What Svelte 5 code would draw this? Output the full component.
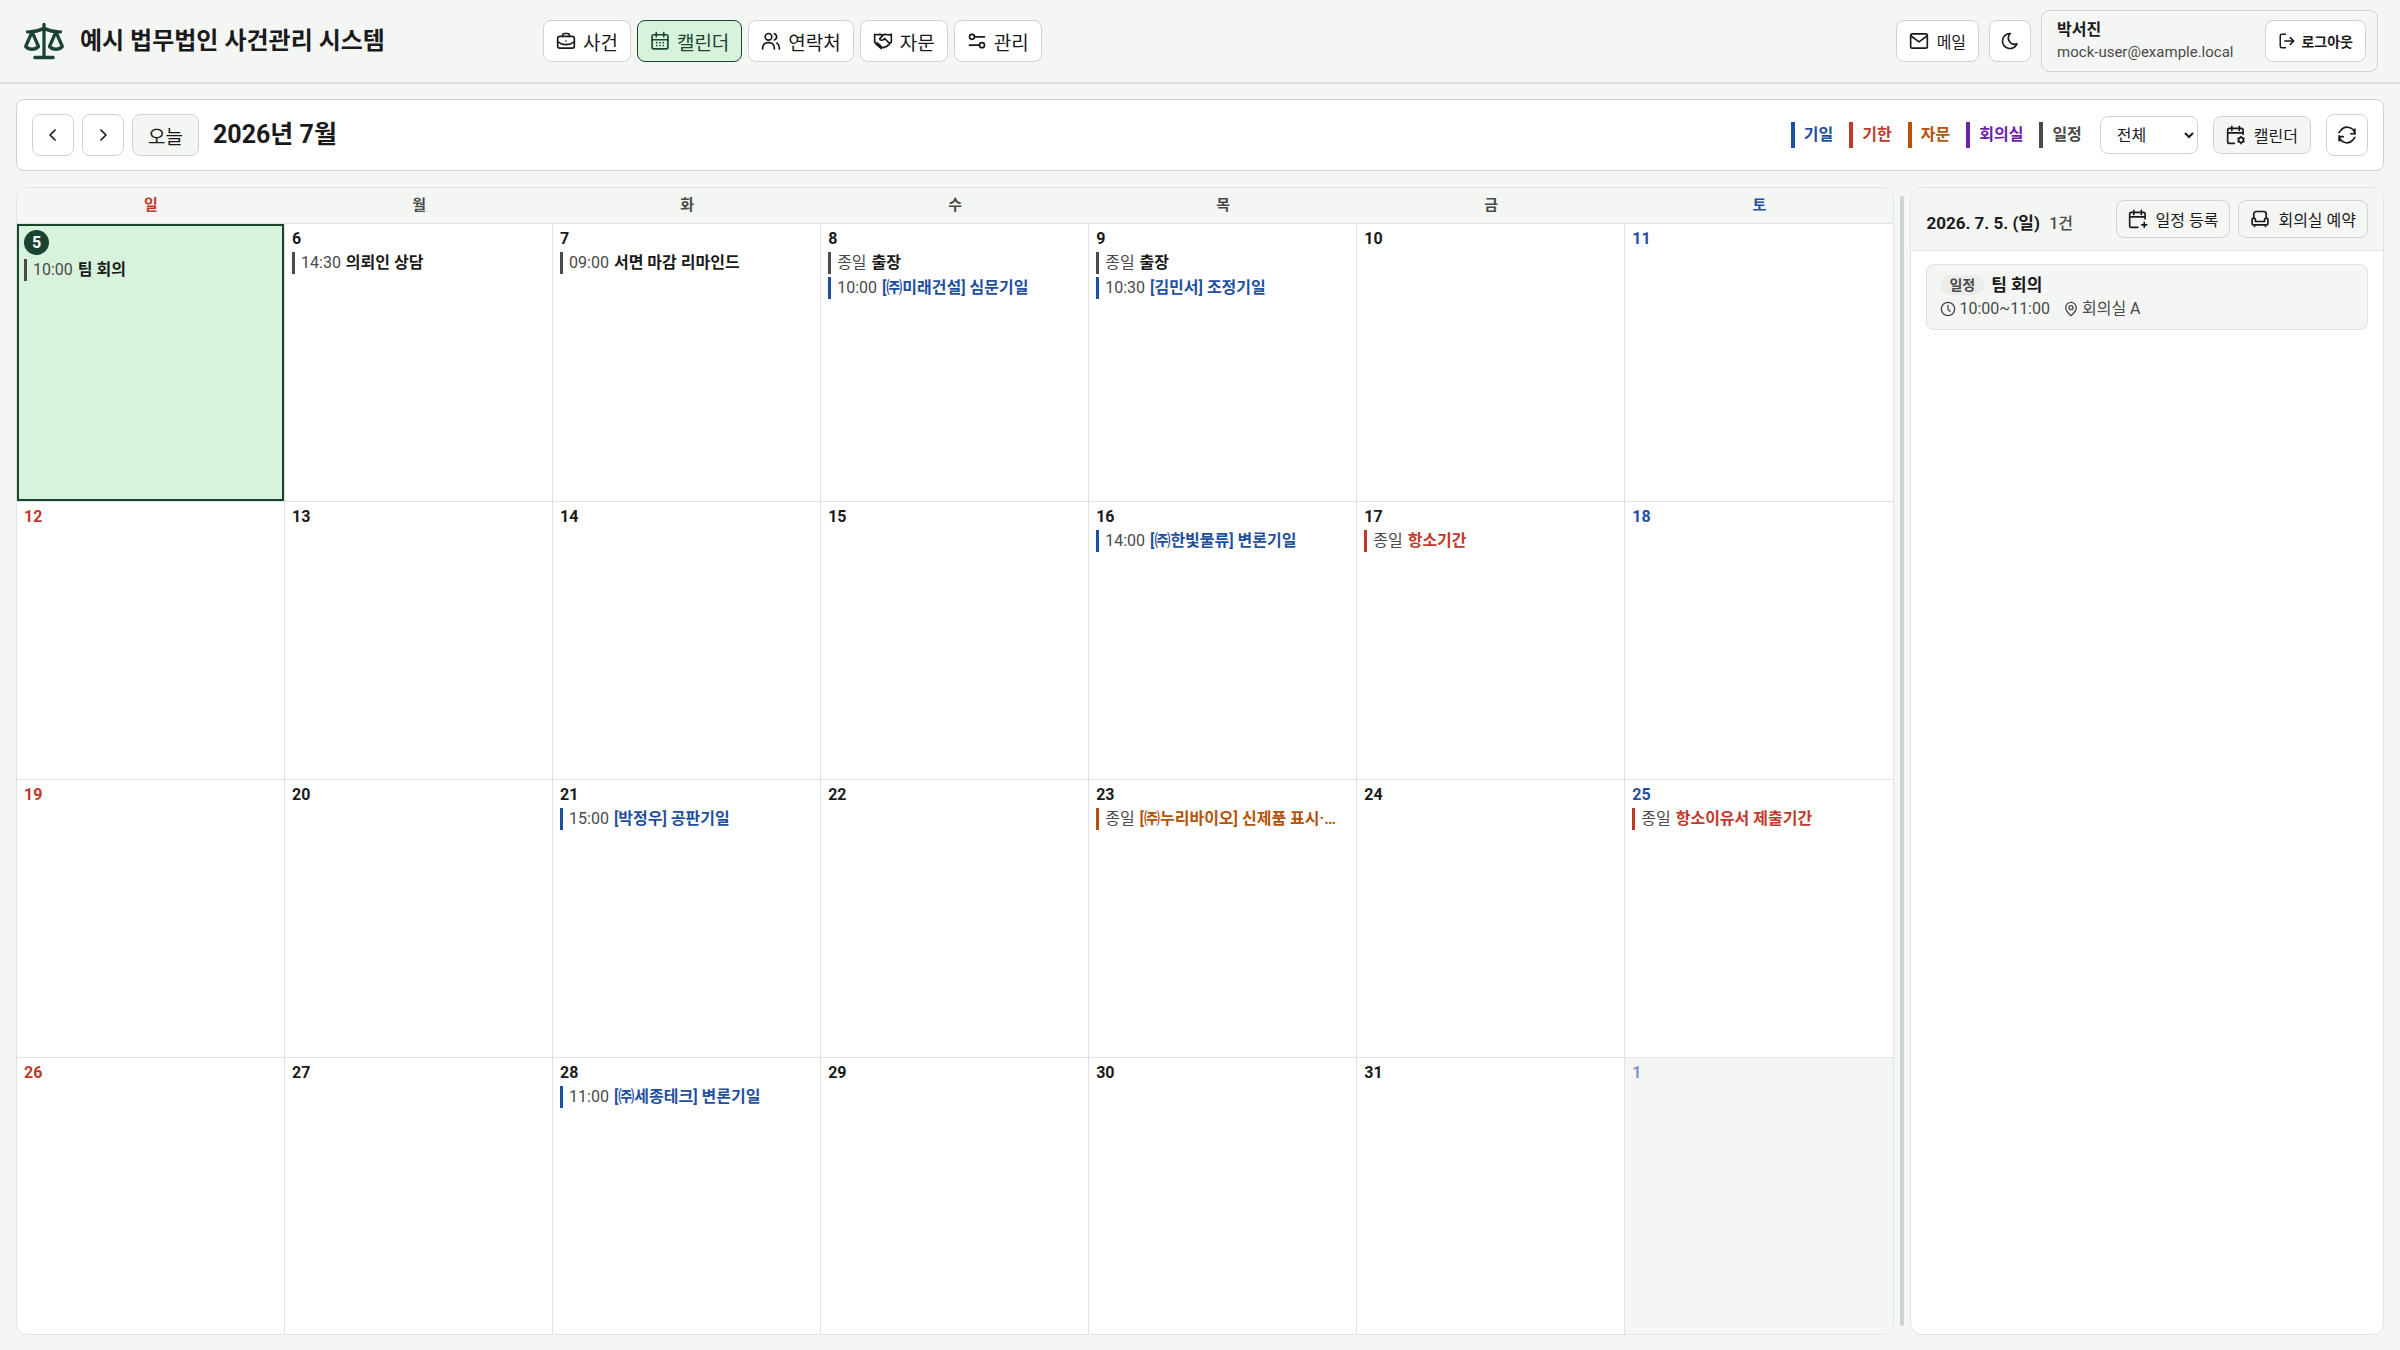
<script>
  const icons = {
    scale: '<path d="M12 3v18M7 21h10M3 7h1c2.500 0 6-1 8-2 2 1 5.500 2 8 2h1"/><path d="m5.500 7-3.500 8c2 2 5 2 7 0zM18.500 7l-3.500 8c2 2 5 2 7 0z"/>',
    briefcase: '<rect x="2" y="6.500" width="20" height="14" rx="2.500"/><path d="M8 6.500V5a2 2 0 0 1 2-2h4a2 2 0 0 1 2 2v1.500M2 13c6 4.500 14 4.500 20 0M12 12v.01"/>',
    calendar: '<rect x="2.500" y="4.500" width="19" height="17" rx="2"/><path d="M7.500 2v5M16.500 2v5M2.500 10.500h19M8 14v.01M12 14v.01M16 14v.01M8 17.500v.01M12 17.500v.01M16 17.500v.01"/>',
    users: '<circle cx="9" cy="7" r="4"/><path d="M2 21.500v-1.500a6 6 0 0 1 6-6h2a6 6 0 0 1 6 6v1.500M16 3.200a4 4 0 0 1 0 7.600M19 14.500a6 6 0 0 1 3 5v2"/>',
    handshake: '<path d="M2 4v9.500L4.500 15M22 4v9.500l-2.500 1.500M2 4c2.500 1 4.500.5 6.500 0l2.500.5M22 4c-3 1.200-5 .5-7 0-1.500 0-2.500.5-3.500 1.500L8 9.500c.5 2 3.500 2 5 .5l1-1 5.500 5.500c1 1.500-.5 3-2 2.500 0 1.500-1.500 2.500-3 1.500-.5 1.500-2 2-3 1"/><path d="M4.500 15c1-1 2.500 0 2 1.500 1.500-.5 2.500.5 2 2 1.500-.5 2.500 1 1.500 2.500L3.500 15.500"/>',
    settings: '<circle cx="6" cy="7" r="3"/><path d="M9 7h12M3 17h12"/><circle cx="18" cy="17" r="3"/>',
    mail: '<rect x="2" y="3.500" width="20" height="17" rx="2"/><path d="m2.500 6 9.500 7 9.500-7"/>',
    moon: '<path d="M12 3h.4a7.500 7.500 0 0 0 7.900 12.400A9 9 0 1 1 12 3z"/>',
    logout: '<path d="M10 3H5a2 2 0 0 0-2 2v14a2 2 0 0 0 2 2h5M9 12h12M16.500 7.500 21 12l-4.500 4.500"/>',
    left: '<path d="m14.500 6-6 6 6 6"/>',
    right: '<path d="m9.500 6 6 6-6 6"/>',
    calendarCog: '<path d="M20.500 11V6a2 2 0 0 0-2-2H4a2 2 0 0 0-2 2v14a2 2 0 0 0 2 2h6M7 1.500v5M16 1.500v5M2 9.500h18.500"/><circle cx="18" cy="18" r="3"/><path d="M18 14v1M18 21v1.500M14.500 16l.8.500M20.700 19.500l.8.500M14.500 20l.8-.5M20.700 16.500l.8-.5"/>',
    calendarPlus: '<path d="M20.500 12V6a2 2 0 0 0-2-2H4a2 2 0 0 0-2 2v14a2 2 0 0 0 2 2h8M7 1.500v5M16 1.500v5M2 9.500h18.500M19.500 16v6M16.500 19h6"/>',
    refresh: '<path d="M21.500 11A9.500 9.500 0 0 0 4.500 6.500L2.500 9M2.500 13a9.500 9.500 0 0 0 17 4.500l2-2.500M2.500 19v-5h5M21.500 5v5.500h-5"/>',
    sofa: '<path d="M4.500 11a2 2 0 0 1 2 2v2h11v-2a2 2 0 1 1 4 0v4a2 2 0 0 1-2 2h-15a2 2 0 0 1-2-2v-4a2 2 0 0 1 2-2zM4.500 11V6a3 3 0 0 1 3-3h9a3 3 0 0 1 3 3v5M5.500 19v2M18.500 19v2"/>',
    clock: '<circle cx="12" cy="12" r="10"/><path d="M12 6.500V12l3 3.500"/>',
    pin: '<circle cx="12" cy="10" r="3"/><path d="M12 22c-5-4.500-8-8-8-12a8 8 0 1 1 16 0c0 4-3 7.500-8 12z"/>'
  };

  const navItems = [
    { label: '사건', icon: 'briefcase' },
    { label: '캘린더', icon: 'calendar' },
    { label: '연락처', icon: 'users' },
    { label: '자문', icon: 'handshake' },
    { label: '관리', icon: 'settings' }
  ];

  const legend = [
    { label: '기일', kind: 'hearing' },
    { label: '기한', kind: 'deadline' },
    { label: '자문', kind: 'advice' },
    { label: '회의실', kind: 'room' },
    { label: '일정', kind: 'schedule' }
  ];

  const weekdays = ['일', '월', '화', '수', '목', '금', '토'];

  const events = {
    5: [{ time: '10:00', title: '팀 회의', kind: 'schedule' }],
    6: [{ time: '14:30', title: '의뢰인 상담', kind: 'schedule' }],
    7: [{ time: '09:00', title: '서면 마감 리마인드', kind: 'schedule' }],
    8: [
      { time: '종일', title: '출장', kind: 'schedule' },
      { time: '10:00', title: '[㈜미래건설] 심문기일', kind: 'hearing' }
    ],
    9: [
      { time: '종일', title: '출장', kind: 'schedule' },
      { time: '10:30', title: '[김민서] 조정기일', kind: 'hearing' }
    ],
    16: [{ time: '14:00', title: '[㈜한빛물류] 변론기일', kind: 'hearing' }],
    17: [{ time: '종일', title: '항소기간', kind: 'deadline' }],
    21: [{ time: '15:00', title: '[박정우] 공판기일', kind: 'hearing' }],
    23: [{ time: '종일', title: '[㈜누리바이오] 신제품 표시·…', kind: 'advice' }],
    25: [{ time: '종일', title: '항소이유서 제출기간', kind: 'deadline' }],
    28: [{ time: '11:00', title: '[㈜세종테크] 변론기일', kind: 'hearing' }]
  };

  // Four weeks starting on Sunday, July 5
  const weeks = Array.from({ length: 4 }, (_, w) =>
    Array.from({ length: 7 }, (_, d) => {
      const n = 5 + w * 7 + d;
      return { day: n > 31 ? n - 31 : n, outside: n > 31, events: events[n] || [] };
    })
  );

  let activeNav = $state('캘린더');
  let selectedDay = $state(5);
  let filter = $state('전체');
</script>

{#snippet icon(name, size = 20)}
  <svg width={size} height={size} viewBox="0 0 24 24" aria-hidden="true">{@html icons[name]}</svg>
{/snippet}

<div class="app">
  <header class="topbar">
    <div class="brand">
      <span class="logo">{@render icon('scale', 44)}</span>
      <h1>예시 법무법인 사건관리 시스템</h1>
    </div>
    <nav>
      {#each navItems as item}
        <button class="btn nav-btn" class:active={activeNav === item.label} onclick={() => (activeNav = item.label)}>
          {@render icon(item.icon)}{item.label}
        </button>
      {/each}
    </nav>
    <div class="account">
      <button class="btn mail">{@render icon('mail')}메일</button>
      <button class="btn square" aria-label="다크 모드">{@render icon('moon')}</button>
      <div class="user">
        <div class="user-info">
          <strong>박서진</strong>
          <span>mock-user@example.local</span>
        </div>
        <button class="btn logout">{@render icon('logout', 18)}로그아웃</button>
      </div>
    </div>
  </header>

  <main>
    <section class="toolbar">
      <button class="btn square" aria-label="이전 달">{@render icon('left')}</button>
      <button class="btn square" aria-label="다음 달">{@render icon('right')}</button>
      <button class="btn today-btn">오늘</button>
      <h2>2026년 7월</h2>
      <div class="legend">
        {#each legend as item}
          <span class="legend-item {item.kind}">{item.label}</span>
        {/each}
      </div>
      <select aria-label="종류" bind:value={filter}>
        <option>전체</option>
        {#each legend as item}
          <option>{item.label}</option>
        {/each}
      </select>
      <button class="btn small tinted">{@render icon('calendarCog')}캘린더</button>
      <button class="btn square" aria-label="새로고침">{@render icon('refresh')}</button>
    </section>

    <div class="content">
      <table class="calendar">
        <thead>
          <tr>
            {#each weekdays as name}
              <th scope="col">{name}</th>
            {/each}
          </tr>
        </thead>
        <tbody>
          {#each weeks as week}
            <tr>
              {#each week as cell}
                <td
                  class:outside={cell.outside}
                  class:selected={!cell.outside && cell.day === selectedDay}
                  onclick={() => (selectedDay = cell.day)}
                >
                  <div class="cell">
                    <div class="day" class:today={cell.day === 5}>{cell.day}</div>
                    {#each cell.events as event}
                      <div class="event {event.kind}">
                        <span class="time">{event.time}</span>
                        <span class="title">{event.title}</span>
                      </div>
                    {/each}
                  </div>
                </td>
              {/each}
            </tr>
          {/each}
        </tbody>
      </table>

      <div class="splitter"><span></span></div>

      <aside class="detail">
        <header class="detail-head">
          <h3>2026. 7. 5. (일) <span>1건</span></h3>
          <div class="detail-actions">
            <button class="btn small tinted">{@render icon('calendarPlus')}일정 등록</button>
            <button class="btn small tinted">{@render icon('sofa')}회의실 예약</button>
          </div>
        </header>
        <article class="card">
          <div class="card-title">
            <span class="badge">일정</span>
            <strong>팀 회의</strong>
          </div>
          <div class="card-meta">
            <span>{@render icon('clock', 16)}10:00~11:00</span>
            <span>{@render icon('pin', 16)}회의실 A</span>
          </div>
        </article>
      </aside>
    </div>
  </main>
</div>

<style>
  :global(body) {
    margin: 0;
    background: #f5f5f5;
  }

  .app {
    --line: #d0d5d1;
    --soft-line: #dfe4e0;
    --tint: #f3f6f3;
    --green: #1b4332;
    --mint: #d8f3dc;
    display: flex;
    flex-direction: column;
    min-height: 100vh;
    color: #1a1a1a;
    font-family: Roboto, 'Noto Sans CJK KR', sans-serif;
    font-size: 16px;
    line-height: 22px;
  }

  .app * {
    box-sizing: border-box;
  }

  svg {
    flex: none;
    fill: none;
    stroke: currentColor;
    stroke-width: 2;
    stroke-linecap: round;
    stroke-linejoin: round;
  }

  h1,
  h2,
  h3 {
    margin: 0;
    font-weight: 700;
  }

  .topbar {
    display: flex;
    align-items: center;
    padding: 10px 22px;
    background: var(--tint);
    border-bottom: 2px solid #dde2de;
  }

  .brand {
    display: flex;
    align-items: center;
    gap: 14px;
    margin-right: 158px;
  }

  .logo {
    display: flex;
    color: var(--green);
  }

  .logo svg {
    stroke-width: 1.8;
  }

  h1 {
    font-size: 24px;
    line-height: 32px;
  }

  nav {
    display: flex;
    gap: 6px;
  }

  .btn {
    display: inline-flex;
    align-items: center;
    justify-content: center;
    gap: 8px;
    height: 42px;
    padding: 0 12px;
    border: 1px solid var(--line);
    border-radius: 8px;
    background: #fff;
    color: #1a1a1a;
    font-family: inherit;
    font-size: 16px;
    white-space: nowrap;
    cursor: pointer;
  }

  .nav-btn {
    font-size: 19px;
    gap: 7px;
  }

  .nav-btn.active {
    background: var(--mint);
    border-color: var(--green);
    color: var(--green);
  }

  .btn.square {
    width: 42px;
    padding: 0;
  }

  .btn.small {
    height: 38px;
  }

  .btn.tinted {
    background: var(--tint);
  }

  .account {
    display: flex;
    align-items: center;
    gap: 10px;
    margin-left: auto;
  }

  .user {
    display: flex;
    align-items: center;
    gap: 32px;
    height: 62px;
    padding: 0 11px 0 15px;
    border: 1px solid var(--line);
    border-radius: 8px;
  }

  .user-info {
    display: flex;
    flex-direction: column;
  }

  .user-info span {
    color: #4a4a4a;
    font-size: 15px;
  }

  .logout {
    gap: 5px;
    font-size: 14px;
    font-weight: 700;
  }

  main {
    flex: 1;
    display: flex;
    flex-direction: column;
    gap: 16px;
    padding: 15px 16px;
  }

  .toolbar {
    display: flex;
    align-items: center;
    gap: 8px;
    padding: 14px 15px;
    border: 1px solid var(--line);
    border-radius: 8px;
    background: #fff;
  }

  .today-btn {
    padding: 0 15px;
    background: var(--tint);
    font-size: 19px;
  }

  h2 {
    margin-left: 6px;
    font-size: 25px;
    line-height: 32px;
  }

  .legend {
    display: flex;
    gap: 16px;
    margin-left: auto;
    margin-right: 10px;
  }

  .legend-item {
    padding-left: 9px;
    border-left: 4px solid var(--kind);
    color: var(--kind);
    font-weight: 700;
    line-height: 26px;
  }

  .hearing {
    --kind: #1f4fa0;
  }

  .deadline {
    --kind: #c0392b;
  }

  .advice {
    --kind: #b45309;
  }

  .room {
    --kind: #6b21a8;
  }

  .schedule {
    --kind: #4a4a4a;
  }

  select {
    width: 98px;
    height: 38px;
    margin-right: 7px;
    padding: 0 2px 0 12px;
    border: 1px solid var(--line);
    border-radius: 8px;
    background: #fff;
    color: #1a1a1a;
    font-family: inherit;
    font-size: 16px;
  }

  .toolbar .small {
    margin-right: 7px;
  }

  .content {
    flex: 1;
    display: flex;
  }

  .calendar {
    flex: 1 1 0;
    width: 100%;
    min-width: 0;
    table-layout: fixed;
    border: 1px solid var(--soft-line);
    border-radius: 12px;
    border-spacing: 0;
    background: #fff;
    overflow: hidden;
  }

  thead tr {
    height: 36px;
  }

  th {
    padding: 0 0 2px;
    background: var(--tint);
    border-bottom: 1px solid var(--soft-line);
    color: #4a4a4a;
    font-size: 15px;
    font-weight: 700;
  }

  th:first-child,
  td:first-child {
    color: #c0392b;
  }

  th:last-child,
  td:last-child {
    color: #1f4fa0;
  }

  td {
    padding: 6px 7px;
    border-right: 1px solid var(--soft-line);
    border-bottom: 1px solid var(--soft-line);
    vertical-align: top;
  }

  td:last-child {
    border-right: 0;
  }

  tbody tr:last-child td {
    border-bottom: 0;
  }

  .cell {
    min-height: 120px;
  }

  .outside {
    background: var(--tint);
  }

  .outside .day {
    opacity: 0.55;
  }

  .selected {
    background: var(--mint);
    box-shadow: inset 0 0 0 2px var(--green);
  }

  .day {
    margin-bottom: 4px;
    font-weight: 700;
    line-height: 18px;
  }

  .day.today {
    width: 25px;
    border-radius: 50%;
    background: var(--green);
    color: #fff;
    line-height: 25px;
    text-align: center;
  }

  .event {
    margin-bottom: 3px;
    padding-left: 6px;
    border-left: 3px solid var(--kind);
    color: var(--kind);
    overflow: hidden;
    text-overflow: ellipsis;
    white-space: nowrap;
  }

  .time {
    margin-right: 1px;
    color: #4a4a4a;
  }

  .title {
    font-weight: 600;
  }

  .event.schedule .title {
    color: #1a1a1a;
  }

  .splitter {
    display: flex;
    flex: none;
    justify-content: center;
    width: 16px;
    padding: 9px 0;
    cursor: col-resize;
  }

  .splitter span {
    width: 4px;
    border-radius: 2px;
    background: #cdd5d1;
  }

  .detail {
    flex: none;
    width: 20%;
    border: 1px solid var(--soft-line);
    border-radius: 12px;
    background: #fff;
    overflow: hidden;
  }

  .detail-head {
    display: flex;
    align-items: center;
    justify-content: space-between;
    padding: 12px 15px;
    background: var(--tint);
    border-bottom: 1px solid var(--soft-line);
  }

  h3 {
    padding-top: 8px;
    font-size: 17px;
  }

  h3 span {
    margin-left: 5px;
    color: #4a4a4a;
    font-size: 16px;
    font-weight: 500;
  }

  .detail-actions {
    display: flex;
    gap: 8px;
  }

  .detail .btn {
    padding: 0 11px;
  }

  .card {
    margin: 13px 15px;
    padding: 8px 13px;
    border: 1px solid var(--soft-line);
    border-radius: 8px;
    background: var(--tint);
  }

  .card-title,
  .card-meta {
    display: flex;
    align-items: center;
    gap: 7px;
    line-height: 24px;
  }

  .card-title strong {
    font-size: 17px;
  }

  .badge {
    padding: 0 9px;
    border-radius: 10px;
    background: #ebedeb;
    color: #4a4a4a;
    font-size: 14px;
    font-weight: 700;
    line-height: 20px;
  }

  .card-meta {
    gap: 13px;
    color: #4a4a4a;
  }

  .card-meta span {
    display: flex;
    align-items: center;
    gap: 3px;
  }
</style>
